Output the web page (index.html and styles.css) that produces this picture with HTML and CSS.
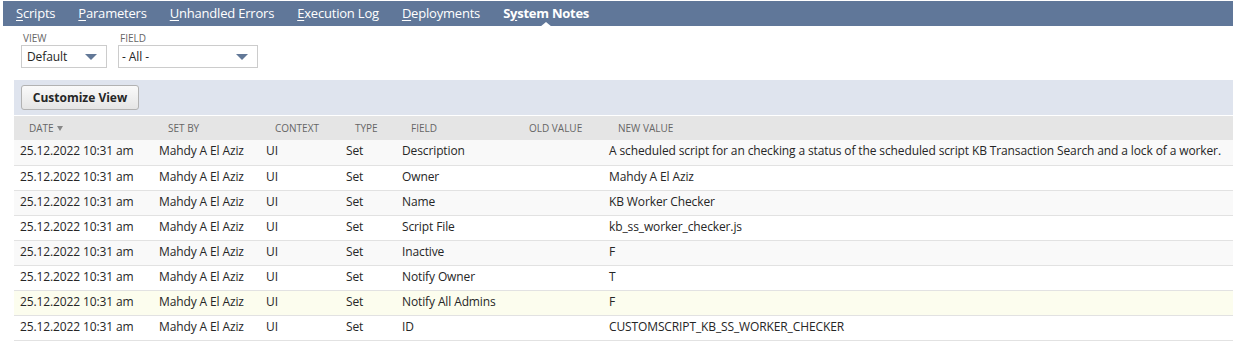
FILE: index.html
```html
<!DOCTYPE html>
<html>
<head>
<meta charset="utf-8">
<link rel="stylesheet" href="styles.css">
</head>
<body>
<nav class="tabs">
  <span class="tab"><u>S</u>cripts</span>
  <span class="tab"><u>P</u>arameters</span>
  <span class="tab"><u>U</u>nhandled Errors</span>
  <span class="tab"><u>E</u>xecution Log</span>
  <span class="tab"><u>D</u>eployments</span>
  <span class="tab active">S<u>y</u>stem Notes</span>
</nav>
<div class="filters">
  <div class="filter">
    <div class="flabel">View</div>
    <div class="select sel-view"><span>Default</span><i class="arrow"></i></div>
  </div>
  <div class="filter">
    <div class="flabel">Field</div>
    <div class="select sel-field"><span>- All -</span><i class="arrow"></i></div>
  </div>
</div>
<div class="listwrap">
  <div class="toolbar"><button class="btn">Customize View</button></div>
  <table class="list">
    <colgroup>
      <col class="c1"><col class="c2"><col class="c3"><col class="c4"><col class="c5"><col class="c6"><col class="c7">
    </colgroup>
    <thead>
      <tr><th>Date<i class="sort"></i></th><th>Set By</th><th>Context</th><th>Type</th><th>Field</th><th>Old Value</th><th>New Value</th></tr>
    </thead>
    <tbody>
      <tr class="alt"><td>25.12.2022 10:31 am</td><td>Mahdy A El Aziz</td><td>UI</td><td>Set</td><td>Description</td><td></td><td>A scheduled script for an checking a status of the scheduled script KB Transaction Search and a lock of a worker.</td></tr>
      <tr><td>25.12.2022 10:31 am</td><td>Mahdy A El Aziz</td><td>UI</td><td>Set</td><td>Owner</td><td></td><td>Mahdy A El Aziz</td></tr>
      <tr class="alt"><td>25.12.2022 10:31 am</td><td>Mahdy A El Aziz</td><td>UI</td><td>Set</td><td>Name</td><td></td><td>KB Worker Checker</td></tr>
      <tr><td>25.12.2022 10:31 am</td><td>Mahdy A El Aziz</td><td>UI</td><td>Set</td><td>Script File</td><td></td><td>kb_ss_worker_checker.js</td></tr>
      <tr class="alt"><td>25.12.2022 10:31 am</td><td>Mahdy A El Aziz</td><td>UI</td><td>Set</td><td>Inactive</td><td></td><td>F</td></tr>
      <tr><td>25.12.2022 10:31 am</td><td>Mahdy A El Aziz</td><td>UI</td><td>Set</td><td>Notify Owner</td><td></td><td>T</td></tr>
      <tr class="hl"><td>25.12.2022 10:31 am</td><td>Mahdy A El Aziz</td><td>UI</td><td>Set</td><td>Notify All Admins</td><td></td><td>F</td></tr>
      <tr><td>25.12.2022 10:31 am</td><td>Mahdy A El Aziz</td><td>UI</td><td>Set</td><td>ID</td><td></td><td>CUSTOMSCRIPT_KB_SS_WORKER_CHECKER</td></tr>
    </tbody>
  </table>
</div>
</body>
</html>
```

FILE: styles.css
```css
* { box-sizing: border-box; }
html, body { margin: 0; padding: 0; background: #fff; }
body {
  font-family: "Open Sans", "DejaVu Sans", sans-serif;
  font-size: 12px;
  color: #262626;
  padding-top: 1px;
}
.tabs {
  margin-left: 3px;
  height: 25px;
  background: #607799;
  display: flex;
  align-items: center;
  padding-left: 1px;
}
.tab {
  position: relative;
  color: #fff;
  font-size: 13px;
  letter-spacing: -0.2px;
  padding: 0 11px 1px 12px;
  line-height: 24px;
  white-space: nowrap;
}
.tab u { text-decoration: underline; text-underline-offset: 2px; }
.tab.active { font-weight: 700; letter-spacing: -0.25px; }
.tab.active::after {
  content: "";
  position: absolute;
  left: 50%;
  bottom: -1px;
  margin-left: -6px;
  border-left: 6px solid transparent;
  border-right: 6px solid transparent;
  border-bottom: 5px solid #fff;
}
.filters {
  display: flex;
  gap: 11px;
  padding: 6px 0 0 21px;
  height: 54px;
}
.flabel {
  font-size: 10px;
  color: #666;
  text-transform: uppercase;
  line-height: 12px;
  padding-left: 2px;
  margin-bottom: 1px;
}
.select {
  height: 23px;
  border: 1px solid #cccccc;
  display: flex;
  align-items: center;
  justify-content: space-between;
  padding: 0 9px 0 5px;
  font-size: 12px;
  letter-spacing: -0.1px;
  color: #262626;
  background: #fff;
}
.sel-view { width: 86px; }
.sel-field { width: 140px; padding-left: 3px; }
.arrow {
  width: 0; height: 0;
  border-left: 6px solid transparent;
  border-right: 6px solid transparent;
  border-top: 6px solid #627897;
}
.listwrap { margin-left: 14px; }
.toolbar {
  background: #dfe4ee;
  height: 36px;
  padding: 5px 0 0 7px;
  border-bottom: 1px solid #fff;
}
.btn {
  font-family: "Open Sans", "DejaVu Sans", sans-serif;
  font-weight: 700;
  font-size: 12px;
  color: #262626;
  height: 25px;
  width: 118px;
  padding: 0;
  border: 1px solid #b2b2b2;
  border-radius: 3px;
  background: linear-gradient(#fafafa, #e5e5e5);
}
.list {
  width: 100%;
  border-collapse: collapse;
  table-layout: fixed;
}
.c1 { width: 139px; }
.c2 { width: 107px; }
.c3 { width: 80px; }
.c4 { width: 56px; }
.c5 { width: 118px; }
.c6 { width: 89px; }
.list th {
  background: #e5e5e5;
  color: #666;
  font-weight: 400;
  font-size: 10px;
  text-transform: uppercase;
  text-align: left;
  height: 24px;
  padding: 0 0 0 15px;
  white-space: nowrap;
}
.sort {
  display: inline-block;
  margin-left: 3px;
  vertical-align: 1px;
  border-left: 3px solid transparent;
  border-right: 3px solid transparent;
  border-top: 5px solid #888;
}
.list td {
  height: 25px;
  padding: 0 0 3px 6px;
  font-size: 12px;
  letter-spacing: -0.12px;
  border-bottom: 1px solid #e2e2e2;
  white-space: nowrap;
  overflow: visible;
}
.list tr.alt td { background: #f9f9f9; }
.list tr.hl td { background: #fcfdee; }
```
